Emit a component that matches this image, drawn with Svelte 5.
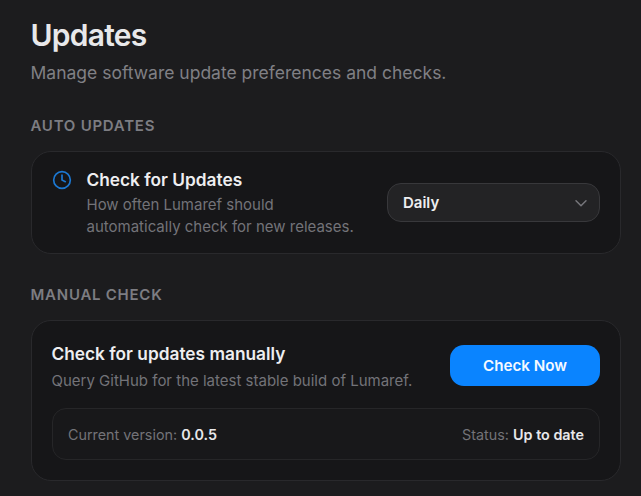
<script>
  let frequency = 'Daily';
  const version = '0.0.5';
  const status = 'Up to date';
</script>

<div class="page">
  <h1>Updates</h1>
  <p class="subtitle">Manage software update preferences and checks.</p>

  <h2 class="section-title">AUTO UPDATES</h2>
  <section class="card auto">
    <svg class="clock" width="20" height="20" viewBox="0 0 24 24" fill="none" stroke="currentColor" stroke-width="2" stroke-linecap="round" stroke-linejoin="round">
      <circle cx="12" cy="12" r="10" />
      <polyline points="12 6 12 12 16 14" />
    </svg>
    <div class="auto-text">
      <h3>Check for Updates</h3>
      <p>How often Lumaref should<br />automatically check for new releases.</p>
    </div>
    <div class="select">
      <span>{frequency}</span>
      <svg width="16" height="16" viewBox="0 0 24 24" fill="none" stroke="currentColor" stroke-width="2.2" stroke-linecap="round" stroke-linejoin="round">
        <polyline points="4.5 8.5 12 16 19.5 8.5" />
      </svg>
    </div>
  </section>

  <h2 class="section-title second">MANUAL CHECK</h2>
  <section class="card manual">
    <div class="manual-top">
      <div class="manual-text">
        <h3>Check for updates manually</h3>
        <p>Query GitHub for the latest stable build of Lumaref.</p>
      </div>
      <button>Check Now</button>
    </div>
    <div class="info">
      <span>Current version: <strong>{version}</strong></span>
      <span>Status: <strong>{status}</strong></span>
    </div>
  </section>
</div>

<style>
  :global(body) {
    margin: 0;
    background: #1c1c1e;
  }

  .page {
    box-sizing: border-box;
    width: 641px;
    height: 496px;
    overflow: hidden;
    padding: 16px 20px 0 31px;
    font-family: Inter, "Liberation Sans", sans-serif;
    color: #f5f5f7;
  }

  h1 {
    margin: 0 0 0 -0.5px;
    font-size: 30px;
    line-height: 38px;
    font-weight: 600;
    letter-spacing: -0.75px;
    color: #e8e8ea;
  }

  .subtitle {
    margin: 8px 0 0 -0.5px;
    font-size: 17.5px;
    line-height: 22px;
    color: #808085;
  }

  .section-title {
    margin: 32px 0 0 -0.5px;
    font-size: 15px;
    line-height: 20px;
    font-weight: 600;
    letter-spacing: 0.75px;
    color: #7d7d82;
  }

  .section-title.second {
    margin-top: 31px;
  }

  .card {
    box-sizing: border-box;
    margin-top: 15px;
    background: #161618;
    border: 1px solid #29292c;
    border-radius: 20px;
  }

  .auto {
    display: flex;
    height: 103px;
    padding: 17px 20px 0;
  }

  .clock {
    flex: none;
    margin-top: 1px;
    color: #1c78d2;
  }

  .auto-text {
    margin-left: 14.5px;
    flex: 1;
  }

  h3 {
    margin: 0;
    font-size: 17.3px;
    line-height: 22px;
    font-weight: 600;
    color: #eeeef0;
  }

  .card p {
    margin: 3px 0 0;
    font-size: 15px;
    line-height: 22px;
    color: #737378;
  }

  .select {
    box-sizing: border-box;
    display: flex;
    align-items: center;
    justify-content: space-between;
    flex: none;
    width: 213px;
    height: 39px;
    margin-top: 14px;
    padding: 0 10px 0 15px;
    background: #232325;
    border: 1px solid #38383b;
    border-radius: 14px;
    font-size: 15px;
    font-weight: 600;
    color: #eeeef0;
  }

  .select svg {
    color: #77777c;
  }

  .manual {
    height: 161px;
    padding: 22px 20px 0;
  }

  .manual-top {
    display: flex;
    justify-content: space-between;
    align-items: flex-start;
  }

  .manual-text {
    margin-left: -0.5px;
  }

  .manual-top p {
    margin-top: 5px;
  }

  button {
    width: 150px;
    height: 41px;
    margin-top: 2px;
    padding: 0;
    border: none;
    border-radius: 14px;
    background: #0a84ff;
    color: #f5f9ff;
    font-family: inherit;
    font-size: 15.2px;
    font-weight: 600;
  }

  .info {
    box-sizing: border-box;
    display: flex;
    justify-content: space-between;
    align-items: center;
    height: 52px;
    margin-top: 16px;
    padding: 0 15px;
    background: #18181a;
    border: 1px solid #262628;
    border-radius: 14px;
    font-size: 14.35px;
    color: #737378;
  }

  strong {
    font-weight: 600;
    color: #e8e8ea;
  }
</style>
